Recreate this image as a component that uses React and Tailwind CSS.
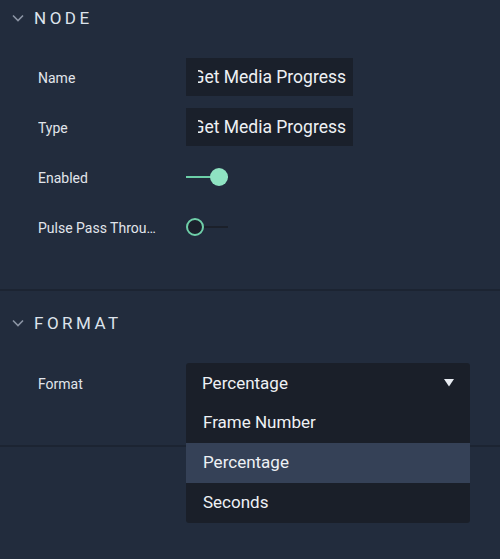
import React from 'react';

function Chevron() {
  return (
    <svg width="12" height="8" viewBox="0 0 12 8" className="shrink-0">
      <path d="M1 1.5 L6 6.5 L11 1.5" fill="none" stroke="#8b94a4" strokeWidth="1.6" />
    </svg>
  );
}

function SectionHeader({ title }) {
  return (
    <div className="flex items-center h-[36px] pl-[12px] gap-[10px]">
      <Chevron />
      <span className="text-[17px] tracking-[3.5px] text-[#dde3ec] leading-none">{title}</span>
    </div>
  );
}

function Row({ label, children }) {
  return (
    <div className="flex items-center h-[50px] pl-[38px]">
      <div className="w-[148px] pt-[2px]">
        <div className="max-w-[123px] truncate text-[14px] text-[#e1e5eb]">{label}</div>
      </div>
      {children}
    </div>
  );
}

function TextValue({ value }) {
  return (
    <div className="w-[167px] h-[38px] bg-[#1a202b] pl-[12px] pr-[7px] flex items-center">
      <div className="w-full overflow-hidden flex justify-end pt-[1px]">
        <span className="whitespace-nowrap text-[17.5px] text-[#eef1f5]">{value}</span>
      </div>
    </div>
  );
}

function Toggle({ on }) {
  return (
    <div className="relative w-[42px] h-[18px] flex items-center">
      <div className={`w-full h-[2px] ${on ? 'bg-[#6ccfa8]' : 'bg-[#1b202a]'}`} />
      {on ? (
        <div className="absolute right-0 top-0 w-[18px] h-[18px] rounded-full bg-[#8fe3c2]" />
      ) : (
        <div className="absolute left-0 top-0 w-[18px] h-[18px] rounded-full bg-[#1b202b] border-2 border-[#6fcfa9]" />
      )}
    </div>
  );
}

export default function App() {
  const options = ['Frame Number', 'Percentage', 'Seconds'];
  const selected = 'Percentage';

  return (
    <div className="h-[559px] bg-[#222c3d] overflow-hidden" style={{ fontFamily: 'Roboto, "Noto Sans", sans-serif' }}>
      {/* Node section */}
      <div className="pb-[37px] border-b-2 border-[#1c2432]">
        <SectionHeader title="NODE" />
        <div className="pt-[16px]">
          <Row label="Name">
            <TextValue value="Get Media Progress" />
          </Row>
          <Row label="Type">
            <TextValue value="Get Media Progress" />
          </Row>
          <Row label="Enabled">
            <Toggle on />
          </Row>
          <Row label="Pulse Pass Through">
            <Toggle on={false} />
          </Row>
        </div>
      </div>

      {/* Format section */}
      <div className="pt-[14px] pb-[37px] border-b-2 border-[#1c2432]">
        <SectionHeader title="FORMAT" />
        <div className="pt-[17px]">
          <Row label="Format">
            <div className="relative w-[284px]">
              <div className="h-[40px] bg-[#1a1f29] rounded-t-[3px] flex items-center justify-between pl-[16px] pr-[16px]">
                <span className="text-[17px] text-[#eef1f5] pt-[1px]">{selected}</span>
                <svg width="10" height="8" viewBox="0 0 10 8">
                  <path d="M0 0 H10 L5 7.5 Z" fill="#e8ecf2" />
                </svg>
              </div>
              <div className="absolute left-0 top-full w-full z-10 bg-[#1a1f29] rounded-b-[3px] overflow-hidden">
                {options.map((opt) => (
                  <div
                    key={opt}
                    className={`h-[40px] flex items-center pl-[17px] text-[17px] text-[#eef1f5] ${opt === selected ? 'bg-[#354157]' : ''}`}
                  >
                    {opt}
                  </div>
                ))}
              </div>
            </div>
          </Row>
        </div>
      </div>
    </div>
  );
}
